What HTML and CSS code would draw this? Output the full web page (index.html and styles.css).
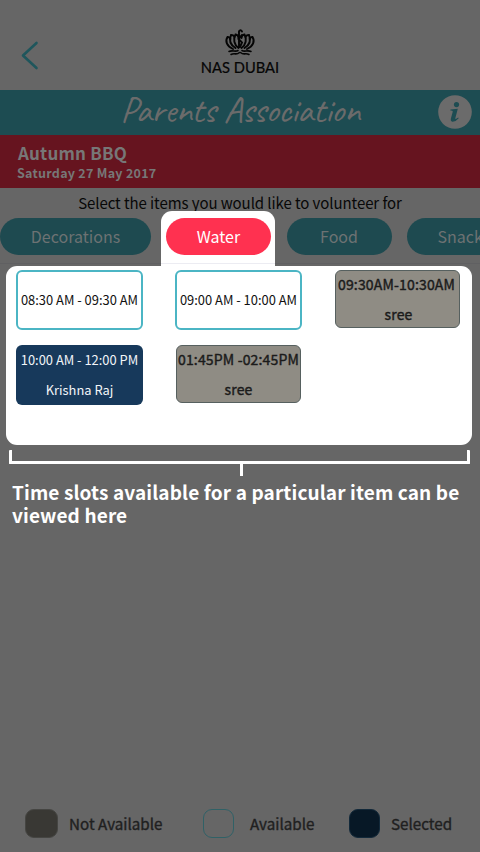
FILE: index.html
```html
<!DOCTYPE html>
<html lang="en">
<head>
<meta charset="utf-8">
<title>Parents Association</title>
<link rel="stylesheet" href="styles.css">
</head>
<body>
<main class="app">
  <header class="top">
    <svg class="back" width="18" height="30" viewBox="0 0 18 30"><path d="M15.500 3 2 15.500 15.500 28" fill="none" stroke="#1f565c" stroke-width="2.600" stroke-linecap="round" stroke-linejoin="round"/></svg>
    <div class="brand">
      <svg width="30" height="28" viewBox="0 0 30 28" fill="none" stroke="#050505" stroke-width="1.900" stroke-linecap="round">
        <path d="M13.500 19C9 16 8 10 10.500 5.500Q13.500 6 13.500 9M16.500 19C21 16 22 10 19.500 5.500Q16.500 6 16.500 9"/>
        <path d="M10.500 19C5.500 16 4 11 6 6Q9 6 9.500 8M19.500 19C24.500 16 26 11 24 6Q21 6 20.500 8"/>
        <path d="M8 20C1.500 17 0 12 2.500 8Q5 8 5.500 10M22 20C28.500 17 30 12 27.500 8Q25 8 24.500 10"/>
        <path d="M14 18V4C13.500 1 16.500 .5 17 2.500M17 6 13.500 10 17 13.500 15 18"/>
        <path d="M4 22.500C8 20.500 10 23.500 13 21.500M17 21.500C20 23.500 22 20.500 26 22.500M6 25.500C10 23.500 11 26.500 14.500 23.500M15.500 23.500C19 26.500 20 23.500 24 25.500" stroke-width="1.600"/>
      </svg>
      <span class="brand-name">NAS DUBAI</span>
    </div>
  </header>
  <section class="titlebar">
    <h1>Parents Association</h1>
    <svg class="info" width="34" height="34" viewBox="0 0 34 34"><circle cx="17" cy="17" r="16.800" fill="#6b6b6b"/><circle cx="18.500" cy="9.600" r="2.600" fill="#1d4c52"/><path d="M12.500 14.500 19.800 13.700 17.300 23.300Q17.200 24.800 20.200 22.500L20.700 23.200Q17.500 27 14.300 26.700 12.300 26.300 12.900 23.500L14.800 16.400Q14.800 15.500 12.300 15.600Z" fill="#1d4c52"/></svg>
  </section>
  <section class="event">
    <h2>Autumn BBQ</h2>
    <p>Saturday 27 May 2017</p>
  </section>
  <p class="prompt"><span>Select the items you would like to volunteer for</span></p>
  <nav class="tabs">
    <div class="tab wide">Decorations</div>
    <div class="spot"><div class="tab active">Water</div></div>
    <div class="tab">Food</div>
    <div class="tab snack">Snacks</div>
  </nav>
  <section class="slots">
    <div class="slot free"><span>08:30 AM - 09:30 AM</span></div>
    <div class="slot free"><span>09:00 AM - 10:00 AM</span></div>
    <div class="slot taken end"><span>09:30AM-10:30AM</span><span>sree</span></div>
    <div class="slot chosen"><span>10:00 AM - 12:00 PM</span><span>Krishna Raj</span></div>
    <div class="slot taken"><span>01:45PM -02:45PM</span><span>sree</span></div>
  </section>
  <div class="bracket"></div>
  <div class="stem"></div>
  <p class="hint">Time slots available for a particular item can be<br>viewed here</p>
  <footer class="legend">
    <i class="key grey"></i><span class="l1">Not Available</span>
    <i class="key open"></i><span class="l2">Available</span>
    <i class="key navy"></i><span class="l3">Selected</span>
  </footer>
</main>
</body>
</html>
```
FILE: styles.css
```css
* { box-sizing: border-box; }
body { margin: 0; background: #666; font-family: "Noto Sans CJK JP", "Noto Sans", sans-serif; }
h1, h2, p { margin: 0; }
.app { width: 480px; height: 852px; overflow: hidden; display: flex; flex-direction: column; background: #666; }
.top { height: 90px; flex: none; display: grid; grid-template-columns: 60px 1fr 60px; }
.back { margin: 40px 0 0 21px; }
.brand { display: flex; flex-direction: column; align-items: center; padding-top: 29px; }
.brand svg { overflow: visible; }
.brand-name { font: 14.7px/20px Lato, sans-serif; color: #050505; white-space: nowrap; -webkit-text-stroke: .2px #050505; }
.titlebar { height: 45px; flex: none; background: #1d4c52; display: grid; grid-template-columns: 42px 1fr 42px; align-items: start; }
.titlebar h1 { grid-column: 2; text-align: center; font: 400 37px/39px Caveat, "Segoe Script", Lato, cursive; letter-spacing: -.5px; color: #6b6b6b; white-space: nowrap; }
.info { margin-top: 5px; }
.event { height: 53px; flex: none; background: #66141f; color: #777; padding: 8px 0 0 17px; }
.event h2 { font-size: 17px; line-height: 20px; font-weight: 700; letter-spacing: .2px; padding-left: 1px; }
.event p { font-size: 12.5px; line-height: 20px; font-weight: 700; letter-spacing: .27px; }
.prompt { height: 23px; flex: none; text-align: center; font-size: 15px; line-height: 30px; letter-spacing: -.08px; color: #080808; white-space: nowrap; }
.tabs { height: 55px; flex: none; display: flex; align-items: flex-start; padding-top: 7px; background: linear-gradient(#606062, #606062) 0 52px / 100% 1px no-repeat; }
.tab { flex: none; width: 105px; height: 37px; border-radius: 19px; background: #1e4a50; color: #6d7273; text-align: center; font-size: 16px; line-height: 37px; }
.wide { width: 151px; }
.spot { flex: none; width: 114px; height: 56px; margin: -7px 11.500px 0 10px; padding: 7px 4px 0 5px; border-radius: 11px 11px 0 0; background: linear-gradient(#ececf2, #ececf2) 0 52px / 100% 1px no-repeat #fff; }
.active { background: #ff3150; color: #fff; }
.snack { margin-left: 15px; width: 115px; padding-left: 31px; text-align: left; }
.slots { width: 466px; height: 179px; flex: none; margin-left: 6px; border-radius: 11px; background: #fff; padding: 4px 12px 0 10px; display: grid; grid-template-columns: 127px 127px 126px; grid-auto-rows: 60px; column-gap: 32px; row-gap: 15px; align-items: start; }
.slot { height: 60px; border-radius: 6px; display: flex; flex-direction: column; align-items: center; white-space: nowrap; font-size: 12.900px; line-height: 30px; }
.free { border: 2px solid #4bb5c4; justify-content: center; color: #111; }
.chosen { background: #17395b; color: #f2f5f8; }
.taken { width: 125px; height: 58px; justify-self: center; border: 1px solid #56605f; background: #8f8c84; color: #1b1b1b; font-size: 14px; letter-spacing: .17px; -webkit-text-stroke: .4px #1b1b1b; }
.taken span { margin-top: -2px; margin-bottom: 2px; }
.end { justify-self: end; padding-right: 2px; }
.end span + span { padding-left: 4px; }
.bracket { flex: none; margin: 5px 0 0 9px; width: 461px; height: 14px; border: 3px solid #fff; border-top: 0; border-radius: 1px; }
.stem { flex: none; margin-left: 240px; width: 3px; height: 12px; background: #fff; }
.hint { flex: none; margin: 4px 0 0 12px; font-size: 19px; line-height: 23px; font-weight: 700; letter-spacing: .13px; color: #fff; white-space: nowrap; }
.legend { margin-top: auto; height: 57px; flex: none; display: flex; align-items: center; font-size: 15.200px; line-height: 24px; color: #202020; white-space: nowrap; -webkit-text-stroke: .35px #202020; }
.legend span { margin-top: -2px; }
.key { flex: none; width: 31px; height: 29px; border-radius: 9px; }
.grey { width: 33px; margin-left: 25px; background: #393834; border: 1px solid #454542; }
.open { border: 1px solid #306166; }
.navy { background: #071826; border: 1px solid #12293a; }
.l1 { width: 145px; padding-left: 11px; }
.l2 { width: 115px; padding-left: 16px; }
.l3 { padding-left: 11px; }
```
